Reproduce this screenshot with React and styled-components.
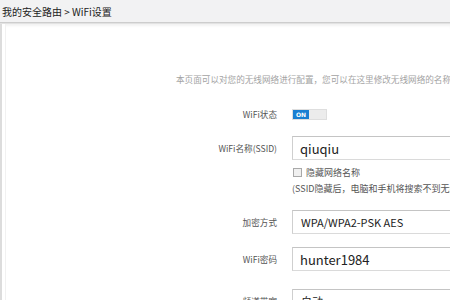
import React from "react";
import styled, { createGlobalStyle } from "styled-components";

const GlobalStyle = createGlobalStyle`
  html, body {
    margin: 0;
    padding: 0;
    background: #ffffff;
    overflow: hidden;
  }
  body {
    font-family: "Noto Sans CJK SC", "Noto Sans", sans-serif;
  }
`;

const Page = styled.div`
  width: 450px;
  height: 300px;
  overflow: hidden;
  background: #ffffff;
`;

const TopBar = styled.div`
  height: 22px;
  display: flex;
  align-items: center;
  padding-left: 2px;
  background: #f2f2f3;
  border-bottom: 1px solid #cdcdcd;
  box-shadow: 0 1px 0 #e2e2e2;
  font-size: 10px;
  color: #222;
  white-space: nowrap;
`;

const Panel = styled.div`
  margin-top: 1px;
  height: 300px;
  border-left: 2px solid #dcdcdc;
  box-shadow: inset 3px 0 0 #ffffff, inset 4px 0 0 #f1f1f1, inset 0 4px 3px -2px #f2f2f2;
  padding-top: 48px;
`;

const Intro = styled.div`
  margin-left: 174px;
  height: 14px;
  line-height: 14px;
  font-size: 8.6px;
  color: #a3a3a3;
  white-space: nowrap;
`;

const Row = styled.div`
  display: grid;
  grid-template-columns: 276px 1fr;
  column-gap: 14px;
  align-items: center;
  height: ${(p) => p.$h || 24}px;
  margin-top: ${(p) => p.$gap || 0}px;
`;

const Label = styled.div`
  text-align: right;
  padding-right: 1px;
  font-size: 8.6px;
  color: #555;
  white-space: nowrap;
`;

const Toggle = styled.div`
  display: flex;
  width: 35px;
  height: 11px;
  border: 1px solid #dedede;
  box-sizing: border-box;
  background: #ececec;
`;

const ToggleOn = styled.div`
  width: 16px;
  height: 100%;
  background: #1a7fd2;
  color: #fff;
  font-size: 6px;
  line-height: 9px;
  text-align: center;
  font-family: "DejaVu Sans", sans-serif;
  font-weight: bold;
`;

const Field = styled.div`
  width: 200px;
  height: 24px;
  box-sizing: border-box;
  border: 1px solid #dadada;
  border-top-color: #c4c4c4;
  border-left-color: #cfcfcf;
  display: flex;
  align-items: center;
  padding-left: ${(p) => p.$pad || 7}px;
  font-size: ${(p) => p.$size || 13}px;
  color: #222;
  white-space: nowrap;
`;

const CheckLine = styled.label`
  display: flex;
  align-items: center;
  gap: 4px;
  font-size: 9px;
  color: #555;
  white-space: nowrap;
`;

const Box = styled.span`
  width: 7px;
  height: 7px;
  border: 1px solid #a9a9a9;
  background: #f0f0f0;
  margin-left: 1px;
`;

const Note = styled.div`
  font-size: 9px;
  color: #555;
  white-space: nowrap;
`;

export default function App() {
  return (
    <Page>
      <GlobalStyle />
      <TopBar>我的安全路由 &gt; WiFi设置</TopBar>
      <Panel>
        <Intro>本页面可以对您的无线网络进行配置，您可以在这里修改无线网络的名称、密码等信息</Intro>
        <Row $gap={16}>
          <Label>WiFi状态</Label>
          <Toggle>
            <ToggleOn>ON</ToggleOn>
          </Toggle>
        </Row>
        <Row $gap={10}>
          <Label>WiFi名称(SSID)</Label>
          <Field>qiuqiu</Field>
        </Row>
        <Row $gap={5} $h={14}>
          <span />
          <CheckLine>
            <Box />
            隐藏网络名称
          </CheckLine>
        </Row>
        <Row $gap={2} $h={14}>
          <span />
          <Note>(SSID隐藏后，电脑和手机将搜索不到无线网络)</Note>
        </Row>
        <Row $gap={15}>
          <Label>加密方式</Label>
          <Field $size={11} $pad={8}>WPA/WPA2-PSK AES</Field>
        </Row>
        <Row $gap={13}>
          <Label>WiFi密码</Label>
          <Field>hunter1984</Field>
        </Row>
        <Row $gap={18}>
          <Label>频道带宽</Label>
          <Field $size={11} $pad={8}>自动</Field>
        </Row>
      </Panel>
    </Page>
  );
}
